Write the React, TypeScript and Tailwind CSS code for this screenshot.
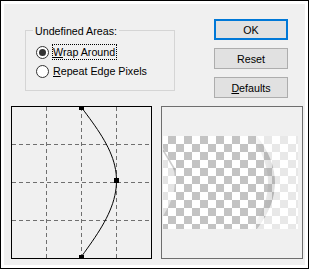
import React from "react";

function Radio({ checked }: { checked?: boolean }) {
  return (
    <div className="w-[13px] h-[13px] rounded-full border border-[#333333] bg-white flex items-center justify-center shrink-0">
      {checked ? <div className="w-[7px] h-[7px] rounded-full bg-[#333333]" /> : null}
    </div>
  );
}

function Graph() {
  const pts: string[] = [];
  const N = 40;
  for (let i = 0; i <= N; i++) {
    const t = i / N;
    const x = 70.5 + 35 * Math.sin(Math.PI * t);
    const y = t <= 0.5 ? 1.5 + (74.5 - 1.5) * (t / 0.5) : 74.5 + (150.5 - 74.5) * ((t - 0.5) / 0.5);
    pts.push(`${x.toFixed(2)},${y.toFixed(2)}`);
  }
  return (
    <svg width="141" height="153" viewBox="0 0 141 153" className="block shrink-0">
      <rect x="0" y="0" width="141" height="153" fill="#f0f0f0" />
      {[35, 70, 105].map((x) => (
        <line key={"v" + x} x1={x + 0.5} y1="1" x2={x + 0.5} y2="152" stroke="#6f6f6f" strokeWidth="1" strokeDasharray="4 3" />
      ))}
      {[38, 76, 114].map((y) => (
        <line key={"h" + y} x1="1" y1={y + 0.5} x2="140" y2={y + 0.5} stroke="#6f6f6f" strokeWidth="1" strokeDasharray="4 3" />
      ))}
      <rect x="0.5" y="0.5" width="140" height="152" fill="none" stroke="#000" strokeWidth="1" />
      <polyline points={pts.join(" ")} fill="none" stroke="#000" strokeWidth="1" />
      <rect x="68" y="0" width="5" height="4" fill="#000" />
      <rect x="103" y="72" width="5" height="5" fill="#000" />
      <rect x="68" y="149" width="5" height="4" fill="#000" />
    </svg>
  );
}

function Preview() {
  return (
    <div className="w-[142px] h-[153px] border border-[#6e6e6e] bg-[#f0f0f0] shrink-0 pt-[29px] pl-[1px]">
      <svg width="135" height="93" viewBox="0 0 135 93" className="block">
        <defs>
          <pattern id="chk" width="16" height="16" patternUnits="userSpaceOnUse" x="5" y="0">
            <rect width="16" height="16" fill="#ffffff" />
            <rect x="0" y="0" width="8" height="8" fill="#c3c3c3" />
            <rect x="8" y="8" width="8" height="8" fill="#c3c3c3" />
          </pattern>
          <linearGradient id="edge" x1="0" x2="1" y1="0" y2="0">
            <stop offset="0" stopColor="#9a9a9a" stopOpacity="0" />
            <stop offset="1" stopColor="#9a9a9a" stopOpacity="0.35" />
          </linearGradient>
        </defs>
        <rect width="135" height="93" fill="url(#chk)" />
        <path d="M88,0 Q122,46.5 88,93 L94,93 Q130,46.5 94,0 Z" fill="url(#edge)" />
        <path d="M94,0 Q130,46.5 94,93 L135,93 L135,0 Z" fill="#ffffff" fillOpacity="0.62" />
        <path d="M0,12 Q24,44 0,80 Z" fill="#ffffff" fillOpacity="0.55" />
        <path d="M0,14 L12,34" stroke="#9a9a9a" strokeOpacity="0.5" strokeWidth="1.5" />
      </svg>
    </div>
  );
}

function Button({ children, focused }: { children: React.ReactNode; focused?: boolean }) {
  return (
    <div
      className={
        focused
          ? "w-[74px] h-[21px] border-2 border-[#0078d7] bg-[#e1e1e1] flex items-center justify-center leading-[12px]"
          : "w-[74px] h-[21px] border border-[#adadad] bg-[#e1e1e1] flex items-center justify-center leading-[12px]"
      }
    >
      {children}
    </div>
  );
}

export default function App() {
  return (
    <div className="w-[310px] h-[270px] bg-white font-['Liberation_Sans',Arial,sans-serif] text-[10.7px] text-black">
      <div className="w-[309px] h-[269px] border border-black bg-white p-[3px]">
        <div className="h-full bg-[#f0f0f0] pt-[15px] pl-[7px]">
          <div className="flex items-start h-[87px]">
            <fieldset className="ml-[14px] mt-[4px] w-[150px] h-[68px] border border-[#d5d5d5]">
              <legend className="ml-[7px] px-[2px] pt-[2px] leading-[12px] h-[14px]">Undefined Areas:</legend>
              <div className="flex flex-col pl-[10px] pt-[7px] gap-[3px]">
                <div className="flex items-center h-[16px]">
                  <Radio checked />
                  <span className="ml-[3px] border border-dotted border-black leading-[14px] h-[16px] pr-[1px]">
                    <span className="underline">W</span>rap Around
                  </span>
                </div>
                <div className="flex items-center h-[16px]">
                  <Radio />
                  <span className="ml-[3px] border border-transparent leading-[14px] h-[16px]">
                    <span className="underline">R</span>epeat Edge Pixels
                  </span>
                </div>
              </div>
            </fieldset>
            <div className="ml-[39px] flex flex-col gap-[8px]">
              <Button focused>OK</Button>
              <Button>Reset</Button>
              <Button>
                <span>
                  <span className="underline">D</span>efaults
                </span>
              </Button>
            </div>
          </div>
          <div className="flex gap-[9px]">
            <Graph />
            <Preview />
          </div>
        </div>
      </div>
    </div>
  );
}
